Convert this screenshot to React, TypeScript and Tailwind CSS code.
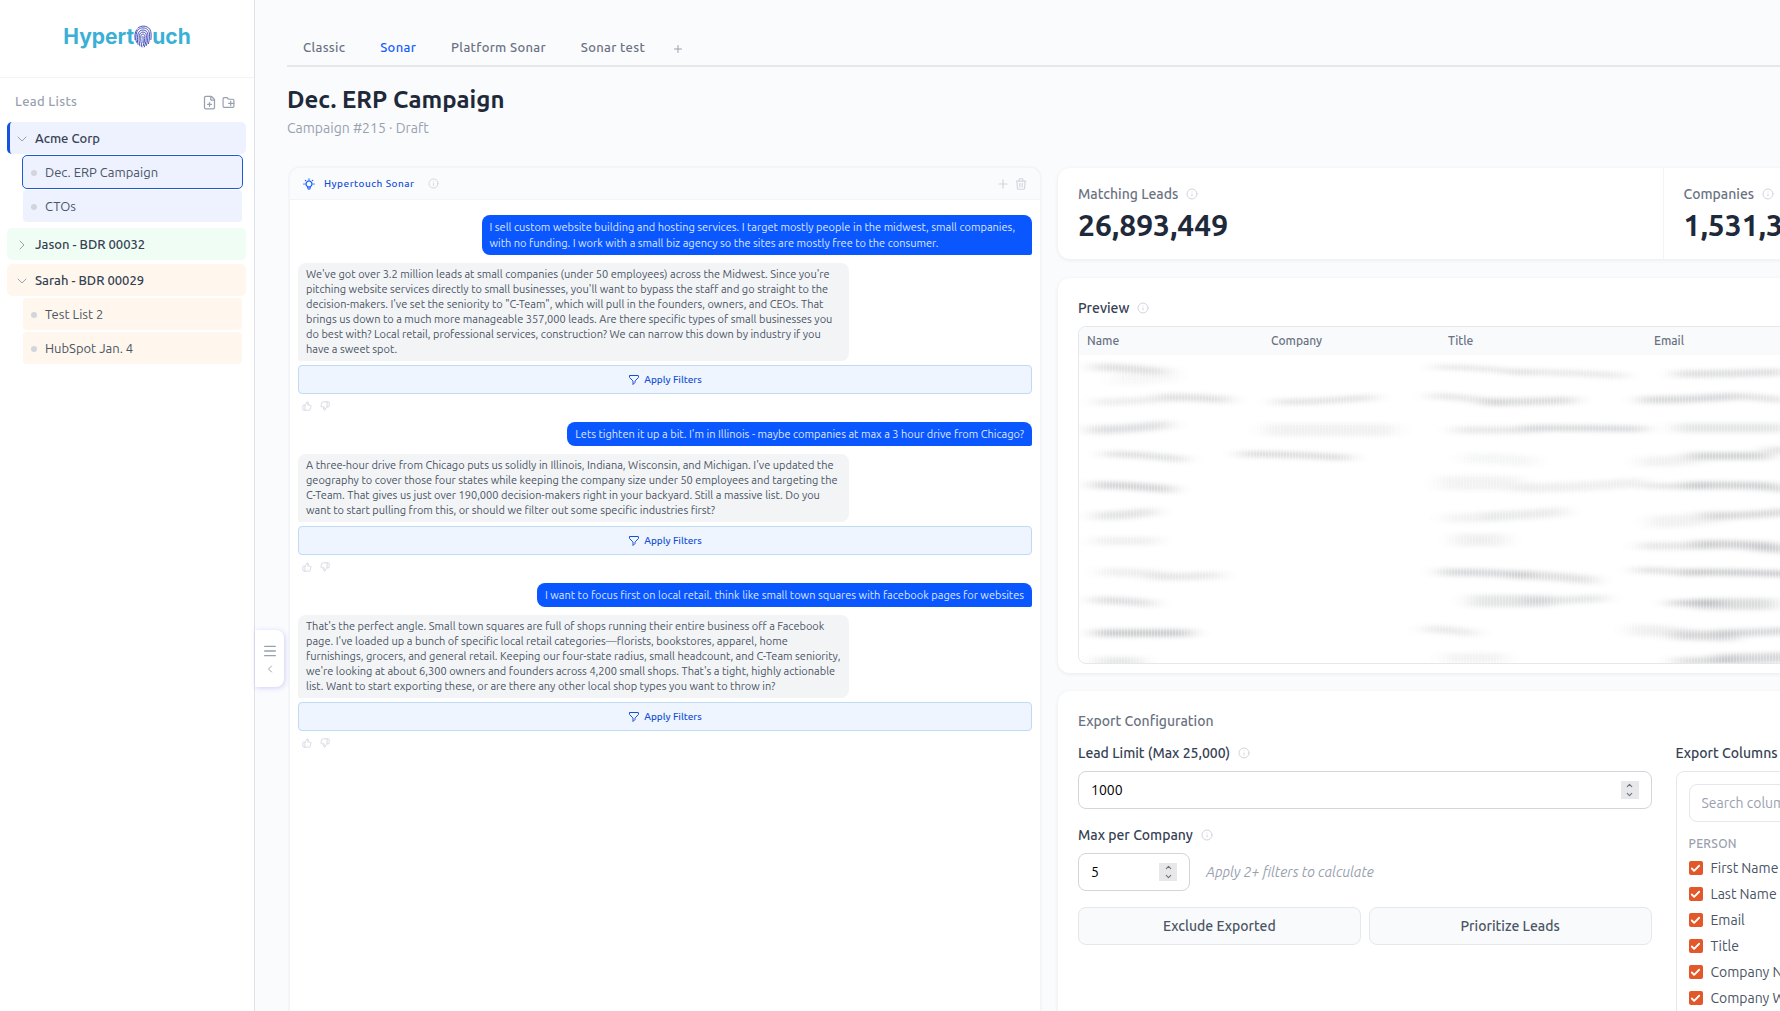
import type { ReactNode } from "react";
import { Info, Plus, ChevronDown, ChevronRight, ChevronLeft, ChevronUp, Menu, ThumbsUp, ThumbsDown, FilePlus, Check } from "lucide-react";
import { HiOutlineFilter, HiOutlineLightBulb, HiOutlineTrash } from "react-icons/hi";

function InfoDot() {
  return <Info className="size-3 text-gray-300" strokeWidth={2} aria-hidden />;
}

function Fingerprint() {
  return (
    <svg viewBox="0 0 34 44" className="h-[23px] w-[18px]" fill="none" stroke="#3a46b4" strokeWidth="1.8" strokeLinecap="round" aria-hidden>
      <path d="M2 28C1 22 1 14 5 9" />
      <path d="M7 6c6-6 18-5 23 2 3 5 3 13 2 20" />
      <path d="M4.500 33C3 28 3 24 4 18 5 10 10 5.500 17 5.500s12 5 12.500 12c.3 6-.5 11-2 18" />
      <path d="M7.500 37C6 31 6 25 7 19c1-6 5-9.500 10-9.500s9.500 4 9.500 9.500c0 7-1 13-3 20" />
      <path d="M11 40C9.500 33 9 27 10 20c.7-4 3.500-6.500 7-6.500s6.500 2.500 6.500 6.500c0 8-1 14-4 22" />
      <path d="M15 42c-1.500-8-3-14-2-21 .3-2.500 2-3.500 4-3.500s3.500 1.500 3.500 4c0 6-1 11-3 18" />
      <path d="M17 22c.5 4 0 8 0 12" />
    </svg>
  );
}

function FolderPlus() {
  return (
    <svg viewBox="0 0 24 24" className="size-[13px]" fill="none" stroke="currentColor" strokeWidth="2.200" strokeLinecap="round" strokeLinejoin="round" aria-hidden>
      <path d="M22 8a2 2 0 0 0-2-2h-8L9.500 3H4a2 2 0 0 0-2 2v14a2 2 0 0 0 2 2h16a2 2 0 0 0 2-2z" />
      <path d="M16 9.500v8M12 13.500h10" />
    </svg>
  );
}

type Group = {
  name: string;
  open: boolean;
  active?: boolean;
  tone: string;
  items: { name: string; active?: boolean }[];
};

const groups: Group[] = [
  { name: "Acme Corp", open: true, active: true, tone: "bg-[#eef2ff]", items: [{ name: "Dec. ERP Campaign", active: true }, { name: "CTOs" }] },
  { name: "Jason - BDR 00032", open: false, tone: "bg-[#f0fdf4]", items: [] },
  { name: "Sarah - BDR 00029", open: true, tone: "bg-[#fff7ed]", items: [{ name: "Test List 2" }, { name: "HubSpot Jan. 4" }] },
];

function Sidebar() {
  return (
    <aside className="flex w-[255px] shrink-0 flex-col border-r border-[#dfe1e5] bg-white">
      <div className="flex h-[78px] items-center justify-center border-b border-gray-100 pb-1">
        <div className="flex items-center font-[Inter] text-[21px] font-bold leading-6 text-[#3bb0d6]" aria-label="Hypertouch">
          <span>Hypert</span>
          <Fingerprint />
          <span>uch</span>
        </div>
      </div>
      <div className="flex h-11 items-center justify-between pl-[15px] pr-[19px] pt-1">
        <h2 className="text-[13px] font-medium tracking-wide text-gray-400">Lead Lists</h2>
        <div className="flex items-center gap-[5px] text-gray-400">
          <button type="button" aria-label="New list"><FilePlus className="size-[15px]" strokeWidth={2} /></button>
          <button type="button" aria-label="New folder"><FolderPlus /></button>
        </div>
      </div>
      <nav className="flex flex-col gap-1 pl-[7px] pr-2">
        {groups.map((g) => (
          <div key={g.name}>
            <button
              type="button"
              className={`flex h-8 w-full items-center gap-[5px] rounded-[5px] border-l-[3px] pl-1 pt-px text-left text-[13px] font-medium text-gray-700 ${g.tone} ${g.active ? "border-[#1552e0]" : "border-transparent"}`}
            >
              {g.open ? <ChevronDown className="size-4 text-gray-400" strokeWidth={1.5} /> : <ChevronRight className="size-4 text-gray-400" strokeWidth={1.5} />}
              {g.name}
            </button>
            {g.open && (
              <ul className="flex flex-col gap-0.5 py-0.5 pl-4 pr-1">
                {g.items.map((it) => (
                  <li key={it.name}>
                    <button
                      type="button"
                      className={`flex h-8 w-full items-center gap-2 rounded pl-2 pt-px text-left text-[13px] text-gray-600 ${g.tone} ${it.active ? "outline outline-1 outline-[#1a5bd0]" : ""}`}
                    >
                      <span className="size-1.5 rounded-full bg-gray-300" />
                      {it.name}
                    </button>
                  </li>
                ))}
              </ul>
            )}
          </div>
        ))}
      </nav>
    </aside>
  );
}

function Tabs() {
  return (
    <div className="flex h-[67px] items-end gap-[3px] border-b-2 border-gray-200 pb-2" role="tablist">
      {["Classic", "Sonar", "Platform Sonar", "Sonar test"].map((t) => (
        <button
          key={t}
          type="button"
          role="tab"
          aria-selected={t === "Sonar"}
          className={`px-4 text-[13px] font-medium leading-5 tracking-wide ${t === "Sonar" ? "text-blue-600" : "text-gray-500"}`}
        >
          {t}
        </button>
      ))}
      <button type="button" aria-label="Add tab" className="ml-2 pb-0.5 text-gray-400">
        <Plus className="size-3" />
      </button>
    </div>
  );
}

function UserMessage({ children }: { children: ReactNode }) {
  return (
    <div className="max-w-3/4 self-end rounded-lg rounded-br-xs bg-[#0a56ff] px-2 py-1 text-[11px] leading-4 text-[#dbe7ff]">
      {children}
    </div>
  );
}

function BotMessage({ children }: { children: ReactNode }) {
  return (
    <div className="flex flex-col">
      <div className="w-3/4 rounded-lg rounded-bl-xs bg-[#f3f4f6] py-1 pl-2 pr-1.5 text-[11px] leading-[15px] text-gray-600">{children}</div>
      <button
        type="button"
        className="mt-1 flex h-[29px] items-center justify-center gap-1 rounded border border-[#bfdbf3] bg-[#eef5fe] text-[10px] font-medium text-[#1450d8]"
      >
        <HiOutlineFilter className="size-3" />
        Apply Filters
      </button>
      <div className="mt-[3px] flex h-[17px] items-center gap-2 pl-1 text-gray-300">
        <button type="button" aria-label="Good reply"><ThumbsUp className="size-[10px]" /></button>
        <button type="button" aria-label="Bad reply"><ThumbsDown className="size-[10px]" /></button>
      </div>
    </div>
  );
}

function ChatPanel() {
  return (
    <section className="ml-px flex min-w-0 flex-col overflow-hidden rounded-t-xl border-2 border-b-0 border-[#f4f5f8] bg-white">
      <header className="flex h-8 shrink-0 items-center border-b border-gray-100 bg-[#fafbfd] px-3">
        <HiOutlineLightBulb className="size-[14px] text-blue-600" />
        <h2 className="ml-2 text-[10px] font-medium tracking-wider text-[#1450d8]">Hypertouch Sonar</h2>
        <span className="ml-3.5"><Info className="size-[11px] text-gray-300" /></span>
        <div className="ml-auto flex items-center gap-1 text-gray-300">
          <button type="button" aria-label="New chat"><Plus className="size-[14px]" /></button>
          <button type="button" aria-label="Delete chat"><HiOutlineTrash className="size-[14px]" /></button>
        </div>
      </header>
      <div className="flex flex-col gap-2 px-2 pt-[15px]">
        <UserMessage>
          I sell custom website building and hosting services. I target mostly people in the midwest, small companies, with no
          funding. I work with a small biz agency so the sites are mostly free to the consumer.
        </UserMessage>
        <BotMessage>
          We've got over 3.2 million leads at small companies (under 50 employees) across the Midwest. Since you're pitching
          website services directly to small businesses, you'll want to bypass the staff and go straight to the decision-makers.
          I've set the seniority to "C-Team", which will pull in the founders, owners, and CEOs. That brings us down to a much
          more manageable 357,000 leads. Are there specific types of small businesses you do best with? Local retail,
          professional services, construction? We can narrow this down by industry if you have a sweet spot.
        </BotMessage>
        <UserMessage>Lets tighten it up a bit. I'm in Illinois - maybe companies at max a 3 hour drive from Chicago?</UserMessage>
        <BotMessage>
          A three-hour drive from Chicago puts us solidly in Illinois, Indiana, Wisconsin, and Michigan. I've updated the
          geography to cover those four states while keeping the company size under 50 employees and targeting the C-Team. That
          gives us just over 190,000 decision-makers right in your backyard. Still a massive list. Do you want to start pulling
          from this, or should we filter out some specific industries first?
        </BotMessage>
        <UserMessage>I want to focus first on local retail. think like small town squares with facebook pages for websites</UserMessage>
        <BotMessage>
          That's the perfect angle. Small town squares are full of shops running their entire business off a Facebook page. I've
          loaded up a bunch of specific local retail categories—florists, bookstores, apparel, home furnishings, grocers, and
          general retail. Keeping our four-state radius, small headcount, and C-Team seniority, we're looking at about 6,300
          owners and founders across 4,200 small shops. That's a tight, highly actionable list. Want to start exporting these,
          or are there any other local shop types you want to throw in?
        </BotMessage>
      </div>
    </section>
  );
}

function Card({ className = "", children }: { className?: string; children: ReactNode }) {
  return <section className={`rounded-xl bg-white shadow-[0_1px_4px_rgba(15,23,42,0.07)] ${className}`}>{children}</section>;
}

function Stat({ label, value }: { label: string; value: string }) {
  return (
    <div className="px-5 py-4">
      <div className="flex items-center gap-2 text-sm font-medium leading-5 text-gray-500">
        {label}
        <InfoDot />
      </div>
      <div className="mt-[3px] text-[30px] font-semibold leading-9 text-gray-800">{value}</div>
    </div>
  );
}

/* x, y, width, vertical drift, thickness, opacity of each redacted smear */
const smears: number[][] = [
  [8, 9, 70, 5, 7, 0.3], [30, 20, 60, -4, 14, 0.08], [350, 9, 90, 6, 5, 0.26], [430, 14, 110, 4, 6, 0.22], [590, 16, 110, -2, 7, 0.32],
  [10, 44, 70, -3, 7, 0.18], [75, 39, 70, 3, 7, 0.3], [190, 44, 100, -5, 6, 0.28], [345, 38, 70, 8, 6, 0.26], [400, 44, 90, -2, 7, 0.34], [555, 42, 90, -3, 7, 0.38], [640, 38, 60, 5, 6, 0.3],
  [4, 72, 80, -6, 8, 0.32], [180, 72, 130, 0, 12, 0.14], [370, 72, 80, 0, 7, 0.24], [440, 70, 120, 1, 6, 0.38], [590, 70, 110, 0, 9, 0.26],
  [20, 96, 80, 6, 6, 0.32], [155, 96, 110, 4, 6, 0.34], [380, 100, 70, 4, 10, 0.1], [555, 104, 60, -3, 10, 0.14], [605, 98, 80, 0, 7, 0.44], [680, 92, 40, 0, 6, 0.3],
  [8, 127, 80, 5, 7, 0.42], [355, 125, 80, 0, 14, 0.12], [430, 130, 130, -6, 9, 0.16], [560, 128, 60, 1, 5, 0.3], [600, 127, 90, 1, 7, 0.44], [680, 130, 40, 6, 6, 0.3],
  [10, 158, 60, -5, 8, 0.28], [360, 160, 50, 0, 9, 0.12], [400, 158, 80, -5, 9, 0.2], [565, 164, 70, -6, 12, 0.14], [620, 158, 90, -5, 7, 0.36],
  [10, 183, 62, 0, 8, 0.16], [370, 182, 50, 0, 12, 0.16], [555, 188, 70, 0, 7, 0.26], [610, 186, 80, 2, 8, 0.42], [670, 190, 40, 3, 8, 0.34],
  [16, 214, 60, 2, 8, 0.16], [65, 219, 70, -2, 7, 0.24], [355, 214, 90, 3, 7, 0.38], [430, 217, 80, 6, 8, 0.3], [550, 212, 60, 4, 6, 0.3], [600, 214, 110, 2, 6, 0.5],
  [8, 242, 60, 4, 7, 0.32], [385, 243, 80, 0, 12, 0.26], [440, 243, 80, -3, 7, 0.26], [585, 245, 50, 0, 6, 0.46], [610, 246, 80, 0, 11, 0.34],
  [10, 275, 96, 0, 7, 0.5], [340, 271, 50, 5, 7, 0.22], [545, 272, 60, 4, 11, 0.16], [590, 277, 60, 2, 9, 0.36], [630, 275, 90, -3, 7, 0.38],
  [12, 304, 44, 0, 10, 0.24], [360, 300, 60, 0, 10, 0.12], [590, 303, 60, -1, 7, 0.34], [630, 301, 80, -2, 10, 0.38],
];

function RedactedRows() {
  return (
    <svg className="block h-[308px] w-full" aria-hidden>
      <defs>
        <filter id="smear" x="-30" y="-15" width="900" height="350" filterUnits="userSpaceOnUse">
          <feGaussianBlur stdDeviation="10 2" />
        </filter>
        <pattern id="comb" width="3" height="4" patternUnits="userSpaceOnUse">
          <rect width="1" height="4" fill="#fff" fillOpacity="0.3" />
        </pattern>
      </defs>
      <g filter="url(#smear)" stroke="#6f7378" fill="none" opacity="0.75">
        {smears.map(([x, y, w, d, t, o]) => (
          <path key={`${x}-${y}`} d={`M${x + 6} ${y + 3}q${w / 2} 0 ${w} ${d}`} strokeWidth={t} strokeOpacity={o} />
        ))}
      </g>
      <rect width="100%" height="100%" fill="url(#comb)" />
    </svg>
  );
}

function Preview() {
  return (
    <Card className="mt-[19px] px-5 pb-[9px] pt-5">
      <h2 className="flex items-center gap-2 text-sm font-medium leading-5 text-gray-700">
        Preview
        <InfoDot />
      </h2>
      <div className="mt-2 overflow-hidden rounded-lg border border-gray-200">
        <table className="w-full table-fixed text-left">
          <thead className="bg-[#f9fafc]">
            <tr className="h-7 text-xs text-gray-500">
              <th className="w-[184px] pl-2 font-medium">Name</th>
              <th className="w-[177px] pl-2 font-medium">Company</th>
              <th className="w-[206px] pl-2 font-medium">Title</th>
              <th className="pl-2 font-medium">Email</th>
            </tr>
          </thead>
          <tbody>
            <tr>
              <td colSpan={4} className="p-0"><RedactedRows /></td>
            </tr>
          </tbody>
        </table>
      </div>
    </Card>
  );
}

function NumberField({ id, value, className = "" }: { id: string; value: number; className?: string }) {
  return (
    <div className={`flex h-[38px] items-center rounded-lg border border-gray-300 bg-white px-3 ${className}`}>
      <input
        id={id}
        type="number"
        defaultValue={value}
        className="min-w-0 flex-1 bg-transparent text-sm text-black outline-none [appearance:textfield] [&::-webkit-inner-spin-button]:appearance-none"
      />
      <span className="flex h-[18px] w-[18px] flex-col items-center justify-center bg-[#e8e8eb] text-gray-500" aria-hidden>
        <ChevronUp className="size-[9px]" strokeWidth={3} />
        <ChevronDown className="size-[9px]" strokeWidth={3} />
      </span>
    </div>
  );
}

const columns = ["First Name", "Last Name", "Email", "Title", "Company Name", "Company Website"];

function ExportConfig() {
  return (
    <Card className="mt-[18px] flex-1 px-5 pt-5">
      <h2 className="text-sm font-medium leading-5 text-gray-500">Export Configuration</h2>
      <div className="mt-3 grid grid-cols-2 gap-6">
        <div>
          <div className="flex items-center gap-2 text-sm font-medium leading-5 text-gray-700">
            <label htmlFor="lead-limit">Lead Limit (Max 25,000)</label>
            <InfoDot />
          </div>
          <NumberField id="lead-limit" value={1000} className="mt-2" />
          <div className="mt-4 flex items-center gap-2 text-sm font-medium leading-5 text-gray-700">
            <label htmlFor="max-company">Max per Company</label>
            <InfoDot />
          </div>
          <div className="mt-2 flex items-center gap-4">
            <NumberField id="max-company" value={5} className="w-28" />
            <span className="text-sm italic text-gray-400">Apply 2+ filters to calculate</span>
          </div>
          <div className="mt-4 grid grid-cols-2 gap-2">
            {["Exclude Exported", "Prioritize Leads"].map((b) => (
              <button key={b} type="button" className="h-[38px] rounded-lg border border-gray-200 bg-[#f9fafb] text-sm font-medium text-gray-600">
                {b}
              </button>
            ))}
          </div>
        </div>
        <div>
          <h3 className="text-sm font-medium leading-5 text-gray-700">Export Columns</h3>
          <div className="mt-2 rounded-lg border border-gray-200 p-3 pb-10">
            <input
              type="search"
              aria-label="Search columns"
              placeholder="Search columns..."
              className="h-[38px] w-full rounded-lg border border-gray-200 px-3 text-sm placeholder:text-gray-400"
            />
            <fieldset className="mt-[13px]">
              <legend className="mb-0.5 text-xs font-medium leading-[18px] tracking-wide text-gray-400">PERSON</legend>
              {columns.map((c) => (
                <label key={c} className="flex h-[26px] items-center gap-2 text-sm text-gray-600">
                  <span className="grid size-[14px] place-items-center">
                    <input type="checkbox" defaultChecked className="col-start-1 row-start-1 size-[14px] appearance-none rounded-xs bg-[#e2582a]" />
                    <Check className="pointer-events-none col-start-1 row-start-1 size-[11px] text-white" strokeWidth={4} />
                  </span>
                  {c}
                </label>
              ))}
            </fieldset>
          </div>
        </div>
      </div>
    </Card>
  );
}

export default function App() {
  return (
    <div className="relative flex h-screen overflow-hidden bg-[#fafbfd] font-[Ubuntu,Roboto,'Noto_Sans',sans-serif] text-gray-700">
      <Sidebar />
      <div className="absolute left-[255px] top-[630px] flex h-[57px] w-[29px] flex-col items-center justify-center rounded-r-lg bg-white text-gray-400 shadow-[1px_1px_5px_rgba(99,102,241,0.28)]">
        <button type="button" aria-label="Collapse sidebar" className="flex flex-col items-center gap-1">
          <Menu className="size-4" strokeWidth={2} />
          <ChevronLeft className="size-3" />
        </button>
      </div>
      <main className="flex min-w-0 flex-1 flex-col overflow-hidden pl-8">
        <Tabs />
        <h1 className="mt-4 pt-px text-2xl font-semibold leading-8 text-gray-800">Dec. ERP Campaign</h1>
        <p className="mt-0.5 text-sm leading-5 text-gray-400">Campaign #215 · Draft</p>
        <div className="mt-7 grid min-h-0 min-w-[1982px] flex-1 grid-cols-[minmax(0,755fr)_minmax(0,1211fr)] gap-4">
          <ChatPanel />
          <div className="flex flex-col pt-0.5">
            <Card className="grid grid-cols-2 divide-x divide-gray-100">
              <Stat label="Matching Leads" value="26,893,449" />
              <Stat label="Companies" value="1,531,302" />
            </Card>
            <Preview />
            <ExportConfig />
          </div>
        </div>
      </main>
    </div>
  );
}
